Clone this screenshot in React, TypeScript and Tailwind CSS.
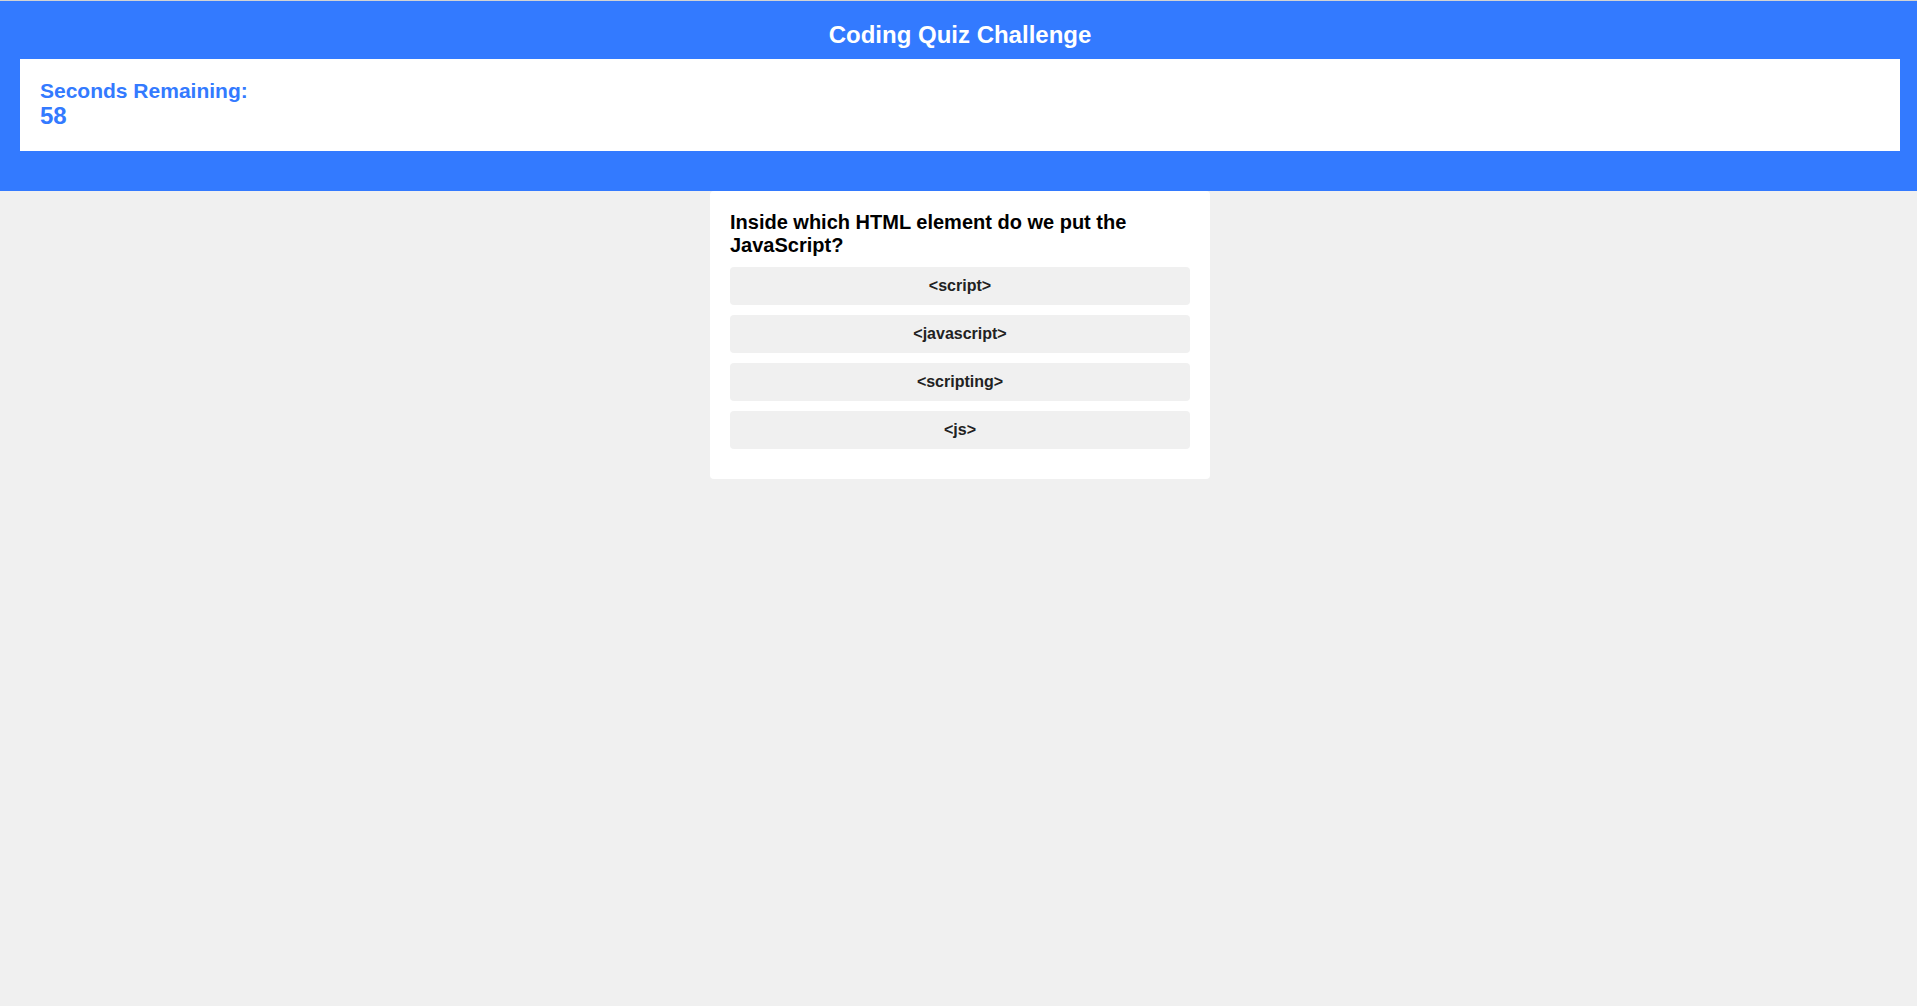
import React from "react";

const answers = ["<script>", "<javascript>", "<scripting>", "<js>"];

export default function App() {
  return (
    <div
      className="min-h-screen overflow-hidden bg-[#f0f0f0]"
      style={{ fontFamily: '"Liberation Sans", Arial, sans-serif' }}
    >
      <div className="w-[1920px]">
        <div className="h-[1px] bg-[#d3d3d3]" />
        <header className="bg-[#337aff] pt-[20px] pb-[40px]">
          <h1 className="text-center text-[24px] leading-[28px] font-bold text-white">
            Coding Quiz Challenge
          </h1>
          <div className="mx-[20px] mt-[10px] h-[92px] bg-white px-[20px] pt-[20px]">
            <div className="text-[21px] leading-[23px] font-bold text-[#337aff]">
              Seconds Remaining:
            </div>
            <div className="text-[24px] leading-[27px] font-bold text-[#337aff]">
              58
            </div>
          </div>
        </header>
        <main className="mx-auto w-[500px] rounded-[4px] bg-white px-[20px] pt-[20px] pb-[20px]">
          <h2 className="text-[20px] leading-[23px] font-bold text-black">
            Inside which HTML element do we put the JavaScript?
          </h2>
          <div className="mt-[10px] flex flex-col gap-[10px]">
            {answers.map((a) => (
              <button
                key={a}
                className="h-[38px] w-full rounded-[4px] bg-[#f0f0f0] text-center text-[16px] font-bold text-[#222222]"
              >
                {a}
              </button>
            ))}
          </div>
          <div className="h-[10px]" />
        </main>
      </div>
    </div>
  );
}
